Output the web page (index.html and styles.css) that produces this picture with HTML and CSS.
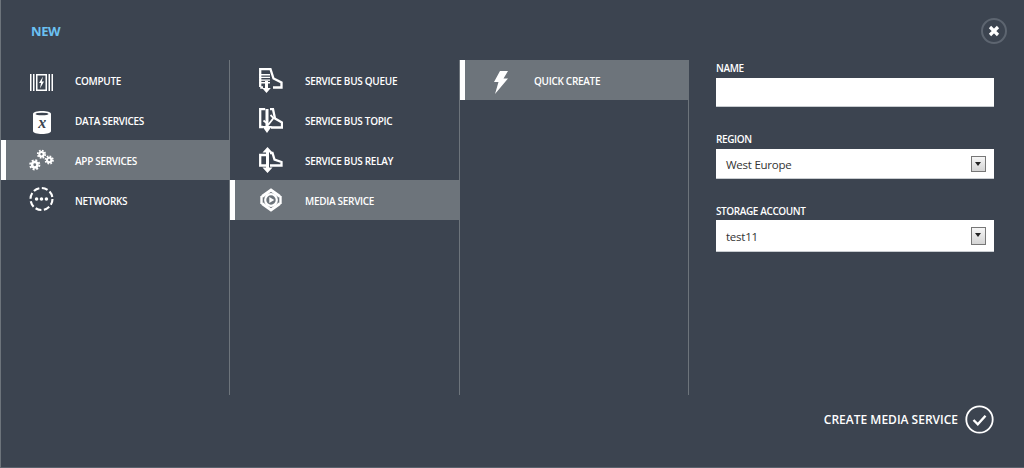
FILE: index.html
```html
<!DOCTYPE html>
<html lang="en">
<head>
<meta charset="utf-8">
<title>New</title>
<link rel="stylesheet" href="styles.css">
</head>
<body>
<div class="dialog">
  <header class="head">
    <h1 class="title">NEW</h1>
    <button class="close" aria-label="Close">
      <svg viewBox="0 0 12 12" width="12" height="12"><path d="M2 2l8 8M10 2l-8 8" class="x"/></svg>
    </button>
  </header>
  <div class="body">
    <ul class="col col-first">
      <li class="row"><span class="ico ico-low">
        <svg viewBox="0 0 23 17" width="23" height="17"><path fill="#fff" d="M0 0h1.500v17H0zM3 0h1.500v17H3zM6 0h11v17H6zM18.500 0H20v17h-1.500zM21.500 0H23v17h-1.500z"/><path fill="#3c4450" d="M7.500 1.500h8v14h-8z"/><path fill="#fff" d="M13 2.500L9 9h2l-1 5.500L14 7.500h-2.200z"/></svg>
      </span><span class="lbl">COMPUTE</span></li>
      <li class="row"><span class="ico ico-low">
        <svg viewBox="0 0 20 23" width="20" height="23"><path fill="#fff" d="M1 3C1 1 5 0 10 0s9 1 9 3v17c0 2-4 3-9 3s-9-1-9-3z"/><ellipse cx="10" cy="3" rx="6.500" ry="1.300" fill="#3c4450"/><text x="10" y="17" class="xvar">x</text></svg>
      </span><span class="lbl">DATA SERVICES</span></li>
      <li class="row on"><span class="ico">
        <svg viewBox="0 0 26 22" width="26" height="22">
          <g fill="none" stroke="#fff">
            <circle cx="6" cy="16" r="2.800" stroke-width="2.600"/><circle cx="6" cy="16" r="4.800" stroke-width="2" stroke-dasharray="2 1.770"/>
            <circle cx="13" cy="5" r="2.300" stroke-width="2.200"/><circle cx="13" cy="5" r="3.900" stroke-width="1.800" stroke-dasharray="1.700 1.360"/>
            <circle cx="21" cy="11" r="2.300" stroke-width="2.200"/><circle cx="21" cy="11" r="3.900" stroke-width="1.800" stroke-dasharray="1.700 1.360"/>
          </g>
        </svg>
      </span><span class="lbl">APP SERVICES</span></li>
      <li class="row"><span class="ico ico-high">
        <svg viewBox="0 0 28 28" width="28" height="28"><circle cx="14" cy="14" r="12.300" fill="none" stroke="#fff" stroke-width="2.400" stroke-dasharray="6.800 2.860"/><circle cx="8.500" cy="14" r="2" fill="#fff"/><circle cx="14" cy="14" r="2" fill="#fff"/><circle cx="19.500" cy="14" r="2" fill="#fff"/></svg>
      </span><span class="lbl">NETWORKS</span></li>
    </ul>
    <ul class="col col-mid">
      <li class="row"><span class="ico">
        <svg viewBox="0 0 24 25" width="24" height="25"><path fill="none" stroke="#fff" stroke-width="2.300" d="M1.200 19V1.200h10.300l3 9.300 8 4v5H14M1.200 19.500H4"/><path fill="#fff" d="M0 6h11v1.400H0zM0 8.700h11v1.400H0zM0 11.400h11v1.400H0zM0 14.100h11v1.400H0zM6 13h3v7h2.800L7.500 25l-4.300-5H6z"/></svg>
      </span><span class="lbl">SERVICE BUS QUEUE</span></li>
      <li class="row"><span class="ico">
        <svg viewBox="0 0 24 25" width="24" height="25"><path fill="none" stroke="#fff" stroke-width="2.300" d="M4 19H1.200V1.200h5M11 1.200h3l2 9.300 7 4v5H12"/><path fill="#fff" d="M6.500 1h3v17H13l-5 7-5-7h3.500z"/><path fill="none" stroke="#fff" stroke-width="1.800" d="M11.500 7l3 3-5 6.500-5-4"/></svg>
      </span><span class="lbl">SERVICE BUS TOPIC</span></li>
      <li class="row"><span class="ico">
        <svg viewBox="0 0 24 26" width="24" height="26"><path fill="none" stroke="#fff" stroke-width="2.300" d="M7 8H1.200v10.500H7M11 6h2.500l2 6.500 7 2.500v3.500H11"/><path fill="#fff" d="M8.500 0l5 5.500h-3.500v15h3.500l-5 5.500-5-5.500H7v-15H3.500z"/></svg>
      </span><span class="lbl">SERVICE BUS RELAY</span></li>
      <li class="row on"><span class="ico">
        <svg viewBox="0 0 22 24" width="22" height="24"><path fill="none" stroke="#fff" stroke-width="2.800" d="M2 8.500L11 2l9 6.500M2 15.500L11 22l9-6.500"/><path fill="none" stroke="#fff" stroke-width="2.400" d="M1.500 8v8M20.500 8v8"/><circle cx="11" cy="12" r="5.800" fill="#6d747b" stroke="#fff" stroke-width="2.200"/><path fill="#fff" d="M9.300 9l5 3-5 3z"/></svg>
      </span><span class="lbl">MEDIA SERVICE</span></li>
    </ul>
    <ul class="col col-last">
      <li class="row on"><span class="ico ico-low">
        <svg viewBox="0 0 14 23" width="14" height="23"><path fill="#fff" d="M6 0h8L9.500 7.500H14L1 23l3.500-12H0z"/></svg>
      </span><span class="lbl">QUICK CREATE</span></li>
    </ul>
    <form class="form">
      <label class="fld"><span class="cap">NAME</span><span class="inp inp-name"></span></label>
      <label class="fld fld-region"><span class="cap">REGION</span><span class="inp inp-region">West Europe<i class="arrow"></i></span></label>
      <label class="fld fld-storage"><span class="cap">STORAGE ACCOUNT</span><span class="inp inp-storage">test11<i class="arrow arrow-tall"></i></span></label>
    </form>
  </div>
  <footer class="foot">
    <span class="go">CREATE MEDIA SERVICE</span>
    <svg viewBox="0 0 29 29" width="29" height="29"><circle cx="14.500" cy="14.500" r="13.200" fill="none" stroke="#fff" stroke-width="1.800"/><path d="M8.500 15l4.300 4.300 7.700-8.500" fill="none" stroke="#fff" stroke-width="2.400"/></svg>
  </footer>
</div>
</body>
</html>
```
FILE: styles.css
```css
* { box-sizing: border-box; }
html, body { margin: 0; height: 100%; overflow: hidden; }
body { background: #3c4450; font-family: "Open Sans", "Noto Sans", sans-serif; color: #fff; }
.dialog { width: 1024px; height: 468px; border-left: 1px solid #6d747b; border-bottom: 1px solid #5a626c; display: flex; flex-direction: column; }
.head { height: 60px; display: flex; align-items: flex-start; justify-content: space-between; padding: 22px 17px 0 30px; }
.title { margin: 0; font-size: 13px; line-height: 18px; font-weight: 700; letter-spacing: -.4px; color: #6bc1f2; }
.close { width: 26px; height: 26px; margin-top: -4px; padding: 0; border: 2px solid #5d6570; border-radius: 50%; background: none; display: flex; align-items: center; justify-content: center; }
.x { stroke: #fff; stroke-width: 3.200; fill: none; }
.body { height: 335px; display: flex; }
.col { margin: 0; padding: 0; list-style: none; border-right: 1px solid #6d747b; }
.col-first { width: 229px; }
.col-mid { width: 230px; }
.col-last { width: 229px; }
.row { height: 40px; display: flex; align-items: center; border-left: 5px solid transparent; font-size: 10px; font-weight: 600; letter-spacing: -.3px; }
.row.on { background: #6d747b; border-left-color: #fff; }
.ico { width: 69px; padding: 0 21px 0 23px; flex: none; display: flex; justify-content: center; }
.col-mid .ico { width: 70px; padding-right: 22px; }
.ico-low { margin-top: 4px; }
.ico-high { margin-top: -2px; }
.lbl { white-space: nowrap; padding-top: 2px; }
.xvar { font-family: "Liberation Serif", serif; font-style: italic; font-weight: 700; font-size: 16px; text-anchor: middle; fill: #3c4450; }
.form { margin-left: 27px; padding-top: 1px; width: 278px; display: flex; flex-direction: column; }
.fld { display: block; }
.cap { display: block; font-size: 10px; line-height: 14px; font-weight: 600; letter-spacing: -.4px; }
.inp { display: flex; align-items: center; justify-content: space-between; margin-top: 3px; padding: 0 8px 0 10px; background: #fff; border-bottom: 1px solid #c8ccd0; color: #333; font-size: 11.500px; letter-spacing: -.25px; }
.inp-name { height: 29px; }
.inp-region { height: 30px; padding-top: 1px; }
.inp-storage { height: 32px; margin-top: 2px; padding-top: 2px; }
.fld-region, .fld-storage { margin-top: 25px; }
.arrow { width: 15px; height: 16px; border: 1px solid #777; background: linear-gradient(#f6f6f6, #d4d4d4); position: relative; }
.arrow-tall { height: 18px; margin-top: -2px; }
.arrow::after { content: ""; position: absolute; left: 3px; top: 5px; border: 3.500px solid transparent; border-top: 4px solid #222; border-bottom: 0; }
.foot { flex: 1; display: flex; align-items: flex-start; justify-content: flex-end; gap: 7px; padding: 10px 30px 0 0; font-size: 12px; font-weight: 600; }
.go { line-height: 29px; }
```
